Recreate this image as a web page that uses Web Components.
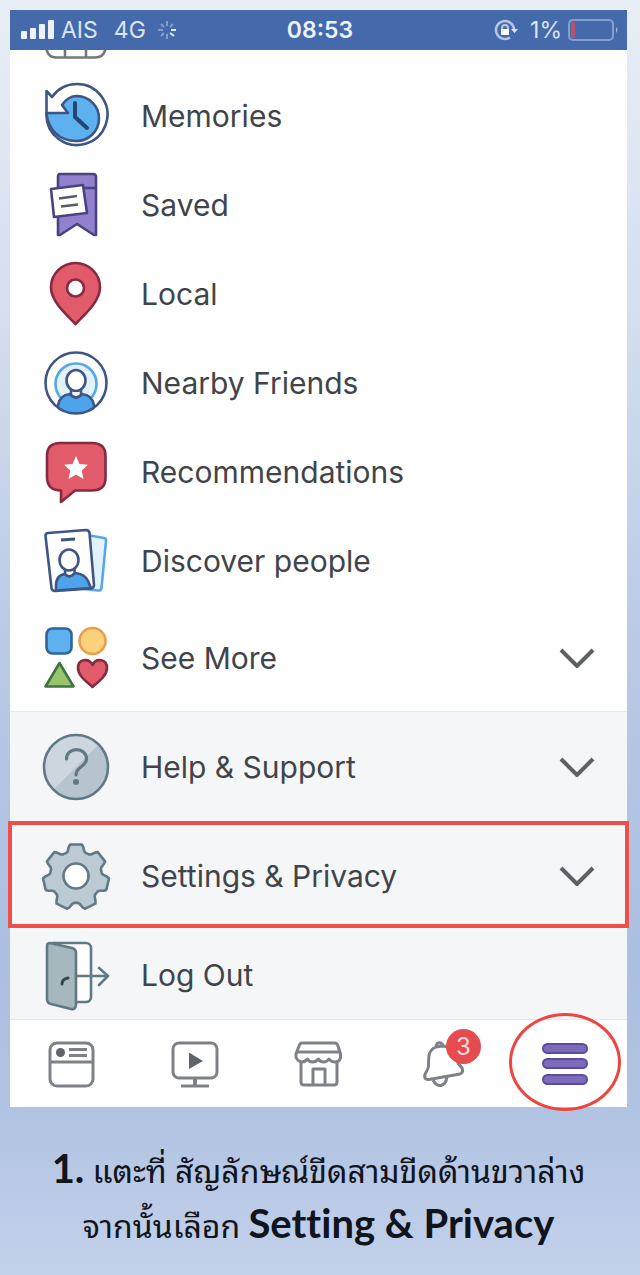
<!DOCTYPE html>
<html lang="th">
<head>
<meta charset="utf-8">
<meta name="viewport" content="width=device-width, initial-scale=1">
<title>Setting &amp; Privacy</title>
<style>
    * { box-sizing: border-box; }
    html { min-height: 100%; background: linear-gradient(#e9eef7 0%, #d3deef 25%, #bacae6 50%, #abbfe1 75%, #b1c3e2 87%, #c3d1ea 100%); }
    body { margin: 0; padding: 10px 13px 0 10px; font-family: Inter, "Liberation Sans", sans-serif; }
</style>
</head>
<body>

<phone-screen>
    <status-bar slot="status" carrier="AIS" network="4G" time="08:53" battery="1%"></status-bar>

    <menu-group clipped>
        <menu-row icon="memories">Memories</menu-row>
        <menu-row icon="saved">Saved</menu-row>
        <menu-row icon="local">Local</menu-row>
        <menu-row icon="nearby">Nearby Friends</menu-row>
        <menu-row icon="recommend">Recommendations</menu-row>
        <menu-row icon="discover">Discover people</menu-row>
        <menu-row icon="more" size="large" expandable>See More</menu-row>
    </menu-group>

    <menu-group shaded>
        <menu-row icon="help" size="large" expandable>Help &amp; Support</menu-row>
        <menu-row icon="gear" size="large" expandable marked>Settings &amp; Privacy</menu-row>
        <menu-row icon="logout">Log Out</menu-row>
    </menu-group>

    <tab-bar slot="tabs">
        <tab-item icon="feed" label="News Feed"></tab-item>
        <tab-item icon="watch" label="Watch"></tab-item>
        <tab-item icon="store" label="Marketplace"></tab-item>
        <tab-item icon="bell" label="Notifications" badge="3"></tab-item>
        <tab-item icon="bars" label="Menu" marked></tab-item>
    </tab-bar>
</phone-screen>

<step-caption>
    <b>1.</b> แตะที่ สัญลักษณ์ขีดสามขีดด้านขวาล่าง<br>
    จากนั้นเลือก <b>Setting &amp; Privacy</b>
</step-caption>

<script>
// Outline of a cog with its teeth spread evenly, first one pointing up
function cogPath(teeth, cx, cy, outer, root) {
    const step = Math.PI * 2 / teeth;
    const points = [];
    for (let i = 0; i < teeth; i++) {
        const a = -Math.PI / 2 + i * step;
        [[root, -0.42], [root + 1, -0.35], [outer - 2, -0.26], [outer, -0.2],
         [outer, 0.2], [outer - 2, 0.26], [root + 1, 0.35], [root, 0.42]].forEach(([r, t]) => {
            points.push((cx + r * Math.cos(a + t * step)).toFixed(1) + ' ' + (cy + r * Math.sin(a + t * step)).toFixed(1));
        });
    }
    return 'M' + points.join('L') + 'Z';
}

// Menu icons are drawn on a 72 grid
const MENU_ICONS = {
    memories: `
        <g stroke="#3f5583" stroke-width="2.6" stroke-linejoin="round">
            <path fill="#fff" d="M12 17A30.500 30.500 0 1 1 6.500 33V11Z"/>
            <path fill="#5cb1ee" d="M6.500 33H28L22 25C26 19 32 16 37 16A22.500 22.500 0 0 1 36 61C20 61 8 50 6.500 33Z"/>
        </g>
        <path fill="none" stroke="#25466f" stroke-width="4" stroke-linecap="round" stroke-linejoin="round" d="M35 23V37L47 48"/>`,
    saved: `
        <g stroke="#4b4282" stroke-width="2.6" stroke-linejoin="round">
            <path fill="#9282ce" d="M20 5H53Q56 5 56 8V66H54L37 55L20 66H18V8Q18 5 20 5Z"/>
            <path fill="none" d="M42 19H56"/>
            <path fill="#fff" d="M11 20L43 16L47 44L14 48Z"/>
        </g>
        <path fill="none" stroke="#555a66" stroke-width="2.4" d="M19 29.500L37 27M21 37.500L38 35.500"/>`,
    local: `
        <path fill="#e25b6a" stroke="#842b43" stroke-width="2.6" stroke-linejoin="round" d="M35.500 66C28 58 11 44 11 29.500A24.500 24.500 0 0 1 60 29.500C60 44 43 58 35.500 66Z"/>
        <circle cx="35.5" cy="30" r="8.5" fill="#fff" stroke="#842b43" stroke-width="2.6"/>`,
    nearby: `
        <clipPath id="ring"><circle cx="36" cy="36" r="30"/></clipPath>
        <circle cx="36" cy="36" r="30" fill="#fff"/>
        <circle cx="36" cy="37" r="20.5" fill="#e2f3fc" stroke="#55a7e6" stroke-width="2.6"/>
        <g clip-path="url(#ring)" stroke="#3f5583" stroke-width="2.6">
            <path fill="#4da3ec" d="M18 70V58Q20 48 30 47Q36 53 42 47Q52 48 54 58V70Z"/>
            <path fill="#fff" d="M31 41V48Q36 53 41 48V41Z"/>
            <ellipse cx="36" cy="33.5" rx="9.5" ry="10.5" fill="#fff"/>
        </g>
        <circle cx="36" cy="36" r="30.5" fill="none" stroke="#3f5583" stroke-width="2.6"/>`,
    recommend: `
        <path fill="#e25b6a" stroke="#842b43" stroke-width="2.6" stroke-linejoin="round" d="M20 7H52Q65.500 7 65.500 20V42Q65.500 54.500 52 54.500H35L21 66V54.500Q7 54.500 7 41V20Q7 7 20 7Z"/>
        <path fill="#fff" d="M36 20L39.500 28L48 28.800L41.700 34.500L43.500 43L36 38.600L28.500 43L30.300 34.500L24 28.800L32.500 28Z"/>`,
    discover: `
        <path fill="#e2f3fc" stroke="#55a7e6" stroke-width="2.6" stroke-linejoin="round" d="M50 10.500L64 13Q66.500 13.500 66 16L61.500 63Q61 66 58 65.500L44 64Z"/>
        <g stroke="#3f5583" stroke-width="2.6" stroke-linejoin="round">
            <path fill="#fff" d="M8 8L46 5Q49 5 49.500 8L54 60Q54 63 51 63.500L15 66Q12 66 11.500 63L5.500 11Q5.500 8 8 8Z"/>
            <path fill="#4da3ec" d="M16 65.500V61Q16 50 25 49Q30 54 35 48Q45 49 48 56L51 63Z"/>
            <path fill="#fff" d="M25 42V49Q30 54 34.500 48V42Z"/>
            <ellipse cx="29" cy="35" rx="9.5" ry="10.5" fill="#fff"/>
            <path stroke-width="3" d="M21 15L35 14"/>
        </g>`,
    more: `
        <rect x="6.5" y="6.5" width="25" height="25" rx="6" fill="#5cb1ee" stroke="#31639d" stroke-width="2.6"/>
        <circle cx="52.5" cy="19" r="13" fill="#f9d27b" stroke="#ea9d4c" stroke-width="2.6"/>
        <path fill="#9ac46a" stroke="#3f733f" stroke-width="2.6" stroke-linejoin="round" d="M19.500 41L33.500 64.500H5.500Z"/>
        <path fill="#e25b6a" stroke="#842b43" stroke-width="2.6" stroke-linejoin="round" d="M52.500 65C47 60 38 54 38 46C38 37 49 35.500 52.500 43C56 35.500 67 37 67 46C67 54 58 60 52.500 65Z"/>`,
    help: `
        <clipPath id="disc"><circle cx="36" cy="36" r="32"/></clipPath>
        <circle cx="36" cy="36" r="32" fill="#ccd6de"/>
        <path clip-path="url(#disc)" fill="#b6c5cd" d="M0 72L72 0V72Z"/>
        <circle cx="36" cy="36" r="32" fill="none" stroke="#607984" stroke-width="2.6"/>
        <path fill="none" stroke="#607984" stroke-width="3.2" stroke-linecap="round" d="M26.500 28C26.500 15.500 46.500 15.500 46.500 28C46.500 36 36 35 36 44"/>
        <circle cx="36" cy="51" r="3" fill="#607984"/>`,
    gear: `
        <path fill="#bccad3" stroke="#607984" stroke-width="2.6" stroke-linejoin="round" d="${cogPath(7, 36, 37, 33, 26)}"/>
        <circle cx="36" cy="36" r="12.5" fill="#fff" stroke="#607984" stroke-width="2.6"/>`,
    logout: `
        <g stroke="#607984" stroke-width="2.6" stroke-linejoin="round">
            <rect x="8" y="4" width="43" height="59" rx="5" fill="#fff"/>
            <path fill="#a6b7be" d="M10 4L32 9Q36 10 36 14V65Q36 71 31 70L11 65Q7 64 7 60V7Q7 4 10 4Z"/>
            <path fill="none" stroke-linecap="round" d="M37 37H67M59 29L68 37L59 46"/>
        </g>
        <path fill="none" stroke="#37464e" stroke-width="3" stroke-linecap="round" d="M22 45Q22 40 28 39"/>`
};

// Tab icons are drawn on a 52 grid
const TAB_ICONS = {
    feed: `
        <g fill="none" stroke="#7e8288" stroke-width="3">
            <rect x="4" y="5" width="43" height="43" rx="7"/>
            <path d="M4 24H47M23 11.500H41M23 17.500H41"/>
        </g>
        <circle cx="14.5" cy="14.5" r="4.5" fill="#5f646b"/>`,
    watch: `
        <g fill="none" stroke="#7e8288" stroke-width="3">
            <rect x="4" y="5" width="44" height="35" rx="6"/>
            <path d="M26 40V47" stroke-width="4"/><path d="M12 48H40"/>
        </g>
        <path fill="#5f646b" d="M20 14.500L34 23L20 31Z"/>`,
    store: `
        <g fill="none" stroke="#7e8288" stroke-width="3" stroke-linejoin="round">
            <path d="M10 5H43Q45 5 46 8L48.500 16V20Q47 24 43 24Q39 24 37 21Q35 24 31.500 24Q28 24 26.500 21Q24 24 20.500 24Q17 24 15.500 21Q13 24 10 24Q5 23 4 19V16L7 8Q8 5 10 5Z"/>
            <path d="M5 14H47M9 24V44Q9 47 12 47H42Q45 47 45 44V24M21 47V31H33V47"/>
        </g>`,
    bell: `
        <g fill="none" stroke="#7e8288" stroke-width="3" stroke-linejoin="round">
            <path d="M20 8Q21 4 25 5Q27 6 27 8M20 9C11 13 13 20 12.500 28C12 34 7 36 9 40Q10 42 13 41.500L44 36Q48 34 46 30L42 25C39 18 37 8 26 8Z"/>
            <path d="M17 42Q20 48 25 47.500Q30 46 31 39"/>
        </g>`,
    bars: `
        <g fill="#7c6abb" stroke="#5c4c9b" stroke-width="2">
            <rect x="4" y="6" width="44" height="9" rx="4.5"/>
            <rect x="4" y="21" width="44" height="9" rx="4.5"/>
            <rect x="4" y="37" width="44" height="9" rx="4.5"/>
        </g>`
};

class PhoneScreen extends HTMLElement {
    constructor() {
        super();
        this.attachShadow({ mode: 'open' }).innerHTML = `
            <style>
                :host { display: flex; flex-direction: column; background: #fff; }
                main { display: block; }
            </style>
            <slot name="status"></slot>
            <main><slot></slot></main>
            <slot name="tabs"></slot>`;
    }
}

class StatusBar extends HTMLElement {
    connectedCallback() {
        if (!this.shadowRoot) this.attachShadow({ mode: 'open' });
        this.shadowRoot.innerHTML = `
            <style>
                :host { display: grid; grid-template-columns: 1fr auto 1fr; align-items: center;
                        height: 40px; padding: 0 8px 0 11px; background: #446aab;
                        color: #dce5f3; font-size: 23px; line-height: 28px; }
                div { display: flex; align-items: center; }
                .left { gap: 6px; }
                .net { margin-left: 10px; }
                .load { margin-left: 4px; }
                .right { justify-content: flex-end; gap: 6px; }
                .lock { margin-right: 6px; }
                strong { font-weight: 600; color: #edf2fa; }
                svg { display: block; }
            </style>
            <div class="left">
                <svg width="34" height="20" viewBox="0 0 34 20" fill="#edf2fa">
                    <rect y="11" width="6" height="8" rx="1"/><rect x="9" y="8" width="6" height="11" rx="1"/>
                    <rect x="18" y="4" width="6" height="15" rx="1"/><rect x="27" width="6" height="19" rx="1"/>
                </svg>
                <span>${this.getAttribute('carrier')}</span>
                <span class="net">${this.getAttribute('network')}</span>
                <svg class="load" width="22" height="20" viewBox="0 0 22 20" fill="none" stroke="#9fb4d8" stroke-width="2">
                    <path d="M11 1V6M17 4L14 7M20 10H15M11 19V14M2 10H7M5 4L8 7M5 16L8 13" opacity=".7"/>
                    <path d="M20 10H15M18 16L14 13" stroke="#e0e8f5"/>
                </svg>
            </div>
            <strong>${this.getAttribute('time')}</strong>
            <div class="right">
                <svg class="lock" width="24" height="22" viewBox="0 0 24 22" fill="none" stroke="#b6c6e2" stroke-width="2.5">
                    <path d="M20 11A9 9 0 1 0 16 18.500"/>
                    <path d="M17 10H24L20.500 14Z" fill="#dce5f3" stroke="none"/>
                    <path d="M8 11V9Q8 6 11 6Q14 6 14 9V11" stroke-width="2"/>
                    <rect x="7" y="10" width="8" height="6" rx="1" fill="#fff" stroke="none"/>
                </svg>
                <span>${this.getAttribute('battery')}</span>
                <svg width="51" height="22" viewBox="0 0 51 22">
                    <rect x="1" y="1" width="44" height="20" rx="4" fill="none" stroke="#849fcf" stroke-width="2"/>
                    <rect x="3" y="3" width="4" height="16" rx="1" fill="#b6506b"/>
                    <path d="M48 8Q51 11 48 14Z" fill="#9fb4d8"/>
                </svg>
            </div>`;
    }
}

class MenuGroup extends HTMLElement {
    connectedCallback() {
        if (!this.shadowRoot) this.attachShadow({ mode: 'open' });
        this.shadowRoot.innerHTML = `
            <style>
                :host { display: block; --large-row: 106px; }
                :host([shaded]) { --large-row: 109px; background: #f5f6f8;
                                  border-top: 1px solid #e6e9ea; border-bottom: 1px solid #e6e9ea; }
                .clip { height: 21px; padding-left: 30px; overflow: hidden; }
                svg { display: block; }
            </style>
            ${this.hasAttribute('clipped') ? `
            <div class="clip">
                <svg width="72" height="10" viewBox="0 0 72 10" fill="none" stroke="#73777f" stroke-width="2.6">
                    <path d="M6 -4Q7 7.500 16 7.500H55Q65 7.500 66 -4M25 0V7M46 0V7"/>
                </svg>
            </div>` : ''}
            <slot></slot>`;
    }
}

class MenuRow extends HTMLElement {
    connectedCallback() {
        if (!this.shadowRoot) this.attachShadow({ mode: 'open' });
        const expandable = this.hasAttribute('expandable');
        this.shadowRoot.innerHTML = `
            <style>
                :host { display: block; position: relative; }
                button { display: flex; align-items: center; gap: 29px; box-sizing: border-box;
                         width: 100%; min-height: 89px; margin: 0; padding: 0 32px 0 30px;
                         border: 0; background: none; color: #414449; text-align: left;
                         font-family: inherit; font-size: 30px; line-height: 36px; cursor: pointer; }
                :host([size=large]) button { min-height: var(--large-row); }
                .label { flex: 1; }
                svg { display: block; flex: none; }
                .mark { position: absolute; inset: 0 -2px 2px -2px; border: 4px solid #ee4f4b; pointer-events: none; }
            </style>
            <button type="button">
                <svg width="72" height="72" viewBox="0 0 72 72">${MENU_ICONS[this.getAttribute('icon')]}</svg>
                <span class="label"><slot></slot></span>
                ${expandable ? `
                <svg width="36" height="20" viewBox="0 0 36 20" fill="none" stroke="#5d6065" stroke-width="4">
                    <path d="M2 2L18 18L34 2"/>
                </svg>` : ''}
            </button>
            ${this.hasAttribute('marked') ? '<div class="mark"></div>' : ''}`;
    }
}

class TabBar extends HTMLElement {
    constructor() {
        super();
        this.attachShadow({ mode: 'open' }).innerHTML = `
            <style>
                :host { display: block; }
                nav { display: grid; grid-template-columns: repeat(5, 1fr); height: 87px; }
            </style>
            <nav><slot></slot></nav>`;
    }
}

class TabItem extends HTMLElement {
    connectedCallback() {
        if (!this.shadowRoot) this.attachShadow({ mode: 'open' });
        const badge = this.getAttribute('badge');
        this.shadowRoot.innerHTML = `
            <style>
                :host { display: grid; place-items: center; }
                button { position: relative; display: block; margin: 0; padding: 0; border: 0;
                         background: none; font-family: inherit; cursor: pointer; }
                svg { display: block; }
                .badge { position: absolute; top: -9px; right: -13px; width: 35px; height: 35px;
                         border-radius: 50%; background: #e64b50; color: #fbd9da;
                         font-size: 24px; line-height: 35px; text-align: center; }
                .mark { position: absolute; inset: -25px -30px -21px -30px; border: 3px solid #ee4540;
                        border-radius: 50%; pointer-events: none; }
            </style>
            <button type="button" aria-label="${this.getAttribute('label')}">
                <svg width="52" height="52" viewBox="0 0 52 52">${TAB_ICONS[this.getAttribute('icon')]}</svg>
                ${badge ? `<span class="badge">${badge}</span>` : ''}
                ${this.hasAttribute('marked') ? '<span class="mark"></span>' : ''}
            </button>`;
    }
}

class StepCaption extends HTMLElement {
    constructor() {
        super();
        this.attachShadow({ mode: 'open' }).innerHTML = `
            <style>
                :host { display: block; padding: 36px 0 22px; color: #10141c; text-align: center;
                        font-family: Lato, "Noto Sans Thai Looped", Loma, Garuda, "Noto Sans Thai", "Noto Sans", sans-serif;
                        font-size: 32px; line-height: 55px; }
                p { margin: 0; }
                ::slotted(b) { font-size: 40px; line-height: 40px; font-weight: 700; font-variant-ligatures: none; }
            </style>
            <p><slot></slot></p>`;
    }
}

customElements.define('phone-screen', PhoneScreen);
customElements.define('status-bar', StatusBar);
customElements.define('menu-group', MenuGroup);
customElements.define('menu-row', MenuRow);
customElements.define('tab-bar', TabBar);
customElements.define('tab-item', TabItem);
customElements.define('step-caption', StepCaption);
</script>
</body>
</html>
